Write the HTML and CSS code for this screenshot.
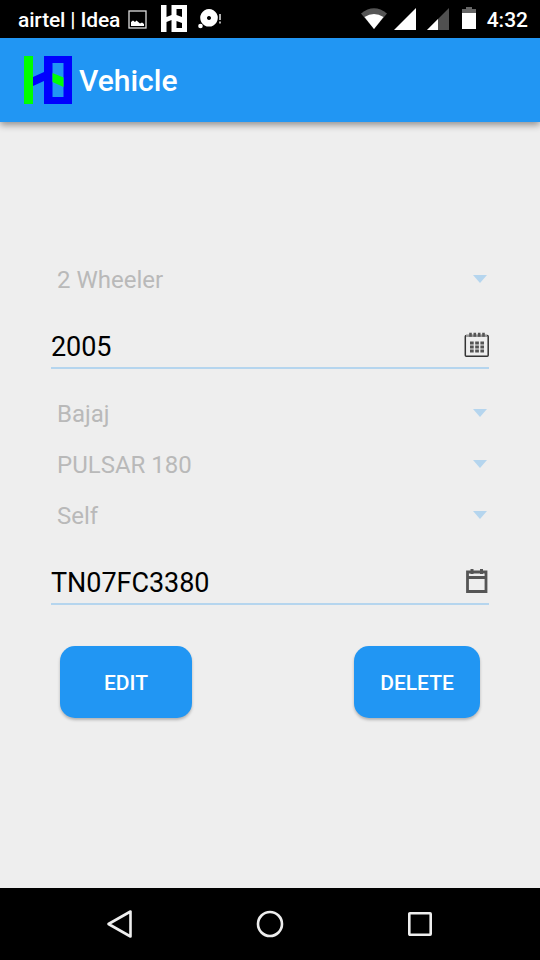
FILE: index.html
```html
<!DOCTYPE html>
<html lang="en">
<head>
<meta charset="utf-8">
<title>Vehicle</title>
<link rel="stylesheet" href="styles.css">
</head>
<body>
<div class="screen">
  <header class="status">
    <span class="carrier">airtel | Idea</span>
    <svg class="ic-picture" width="19" height="19" viewBox="0 0 19 19"><rect x="1" y="1" width="17" height="17" fill="none" stroke="#ddd" stroke-width="1.300"/><path d="M3 16v-4l2-1.500 2 1.500 1.500-1.500 3.500 3 2-1 2 1.500v2z" fill="#fff"/></svg>
    <svg class="ic-app" width="26" height="27" viewBox="0 0 26 27"><path fill="#fff" fill-rule="evenodd" d="M0 0h5.500v12l5-2V0H26v27H10.500V15l-5 2v10H0zM15.500 4v6l5.500 2V4zM15.500 16v7H21v-5z"/></svg>
    <svg class="ic-disc" width="24" height="20" viewBox="0 0 24 20"><path fill="#fff" fill-rule="evenodd" d="M11 0a8.800 8.800 0 1 0 .01 0zM11 7a2 2 0 1 1-.01 0z"/><circle cx="2.500" cy="17" r="2.300" fill="#fff"/><path d="M22 5v6M22 12.500v2" stroke="#ddd" stroke-width="1.600"/></svg>
    <span class="spacer"></span>
    <svg class="ic-wifi" width="26" height="22" viewBox="0 0 26 22"><path d="M0 5.500Q13-5 26 5.500L13 21z" fill="#555"/><path d="M3.500 9Q13 3 22.500 9L13 21z" fill="#fff"/></svg>
    <svg class="ic-signal" width="22" height="22" viewBox="0 0 22 22"><path d="M0 22L22 0v22z" fill="#fff"/></svg>
    <svg class="ic-signal2" width="22" height="22" viewBox="0 0 22 22"><path d="M0 22L22 0v22z" fill="#505050"/><path d="M0 22L11 11v11z" fill="#fff"/></svg>
    <svg class="ic-battery" width="14" height="22" viewBox="0 0 14 22"><path d="M0 2h4V0h6v2h4v5H0z" fill="#666"/><path d="M0 6h14v16H0z" fill="#fff"/></svg>
    <span class="clock">4:32</span>
  </header>
  <div class="appbar">
    <svg width="48" height="48" viewBox="0 0 48 48"><path d="M0 0h9v48H0z" fill="#0f0"/><path d="M9 21l11-5V0h28v48H20V25L9 30z" fill="#00f"/><path d="M28.500 7h11v34h-11z" fill="#2196f3"/><path d="M28.500 17l11 4.500V31l-11-5z" fill="#0f0"/></svg>
    <h1>Vehicle</h1>
  </div>
  <main class="form">
    <div class="spinner"><span>2 Wheeler</span><i class="arrow"></i></div>
    <div class="field"><span>2005</span>
      <svg width="25" height="25" viewBox="0 0 25 25"><rect x="1.300" y="3.500" width="22.900" height="20.700" rx="1" fill="none" stroke="#333" stroke-width="1.500"/><path d="M2 4h21" stroke="#999" stroke-width="2"/><path d="M6.500.8v4M10.800.8v4M15.200.8v4M19.500.8v4" stroke="#555" stroke-width="2.600"/><path d="M6 11h14M6 15h14M6 19h14" stroke="#555" stroke-width="2.800" stroke-dasharray="3.700 1.500"/></svg>
    </div>
    <div class="spinner"><span>Bajaj</span><i class="arrow"></i></div>
    <div class="spinner"><span>PULSAR 180</span><i class="arrow"></i></div>
    <div class="spinner"><span>Self</span><i class="arrow"></i></div>
    <div class="field"><span>TN07FC3380</span>
      <svg width="25" height="25" viewBox="0 0 25 25"><path d="M3.500 4h18.500v19.500h-18.500zM3.500 9.500h19" fill="none" stroke="#555" stroke-width="2.800"/><path d="M8 1v5M17.500 1v5" stroke="#555" stroke-width="3"/></svg>
    </div>
    <div class="actions"><button class="edit">EDIT</button><button class="delete">DELETE</button></div>
  </main>
  <nav class="nav">
    <svg width="30" height="30" viewBox="0 0 30 30"><path d="M3.500 15L25.500 2.500v25z"/></svg>
    <svg width="30" height="30" viewBox="0 0 30 30"><circle cx="15" cy="15" r="12"/></svg>
    <svg width="30" height="30" viewBox="0 0 30 30"><rect x="4.300" y="4.300" width="21.400" height="21.400" rx=".6"/></svg>
  </nav>
</div>
</body>
</html>
```
FILE: styles.css
```css
* { box-sizing: border-box; }
body { margin: 0; font-family: Roboto, "Liberation Sans", sans-serif; }
svg { display: block; flex: none; }
.screen { width: 540px; height: 960px; display: flex; flex-direction: column; background: #eee; }
.status { height: 38px; flex: none; display: flex; align-items: center; padding: 0 12px 0 18px; background: #000; color: #fff; font-size: 21px; font-weight: 500; white-space: nowrap; }
.carrier { width: 110px; padding-top: 1px; letter-spacing: -.15px; }
.ic-app { margin-left: 14px; margin-top: -1px; }
.ic-disc { margin-left: 11px; margin-top: -1px; }
.spacer { flex: 1; }
.ic-wifi { margin-right: 7px; }
.ic-signal2 { margin-left: 11px; }
.ic-battery { margin-left: 13px; margin-top: -2px; }
.clock { margin-left: 11px; padding-top: 1px; }
.appbar { height: 84px; flex: none; display: flex; align-items: center; gap: 7px; padding-left: 24px; background: #2196f3; color: #fff; box-shadow: 0 3px 7px rgba(0, 0, 0, .4); }
h1 { margin: 0; padding-top: 2px; font-size: 30px; font-weight: 500; line-height: 36px; }
.form { flex: 1; padding: 132px 51px 0; }
.spinner { height: 51px; display: flex; align-items: center; justify-content: space-between; padding: 1px 2px 0 6px; font-size: 24px; color: #b9b9b9; }
.arrow { width: 14px; height: 8px; margin-top: -2px; background: #b5d5ee; clip-path: polygon(0 0, 100% 0, 50% 100%); }
.field { height: 44px; margin: 20px 0 19px; padding: 0 0 3px; display: flex; align-items: center; justify-content: space-between; border-bottom: 2px solid #b5d5ee; font-size: 27px; letter-spacing: -.05px; color: #000; }
.field span { padding-top: 5px; }
.actions { display: flex; justify-content: space-between; margin-top: 41px; padding: 0 9px; }
button { height: 72px; padding: 2px 0 0; border: 0; border-radius: 15px; background: #2196f3; color: #fff; font: 500 21px Roboto, sans-serif; box-shadow: 0 2px 3px rgba(0, 0, 0, .25); }
.edit { width: 132px; }
.delete { width: 126px; }
.nav { height: 72px; flex: none; display: flex; justify-content: center; align-items: center; gap: 120px; background: #000; }
.nav svg { fill: none; stroke: #eee; stroke-width: 2.6; stroke-linejoin: round; }
```
